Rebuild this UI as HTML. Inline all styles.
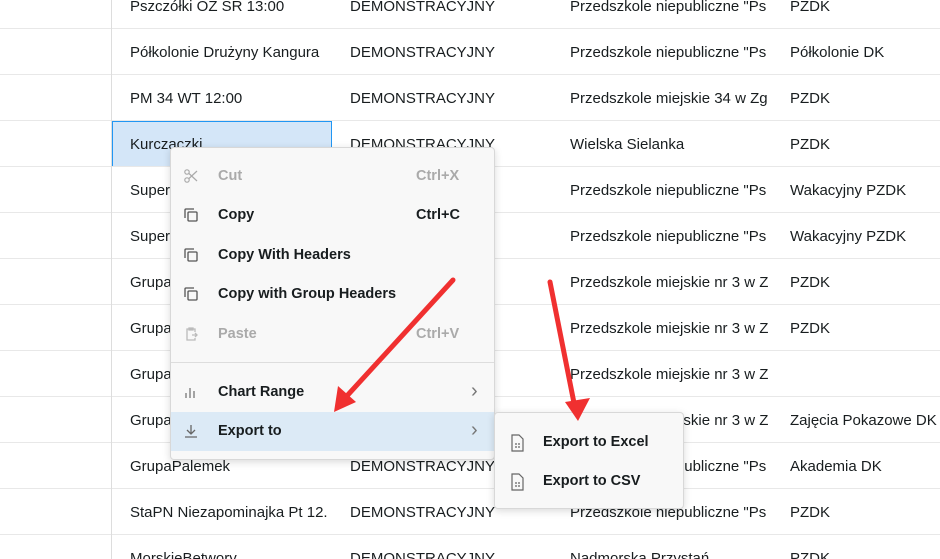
<!DOCTYPE html>
<html><head><meta charset="utf-8"><style>
html,body{margin:0;width:940px;height:559px;overflow:hidden}
body{background:#fff;font-family:"Liberation Sans",sans-serif;font-size:15px;color:#181d1f;position:relative}
.row{position:absolute;left:0;width:940px;height:46px;border-bottom:1px solid #e8e8e8;box-sizing:border-box}
.c{position:absolute;top:1px;height:45px;line-height:45px;white-space:nowrap;overflow:hidden}
.c1{left:130px;width:200px}.c2{left:350px;width:200px}.c3{left:570px;width:201px}.c4{left:790px;width:150px}
.vl{position:absolute;left:111px;top:0;width:1px;height:559px;background:#ddd;z-index:1}
.sel{position:absolute;left:112px;top:121px;width:220px;height:46px;background:#d4e6f8;border:1px solid #2196f3;box-sizing:border-box}
.menu{position:absolute;left:170px;top:147px;width:325px;height:313px;background:#f8f8f8;border:1px solid #d8d8d8;border-radius:4px;box-shadow:0 2px 8px rgba(0,0,0,.15);box-sizing:border-box;z-index:2}
.mi{position:absolute;left:0;width:323px;height:39px;line-height:39px;font-weight:bold;color:#181d1f;font-size:14.5px}
.mi .t{position:absolute;left:47px}.mi .k{position:absolute;left:245px}
.mi.dis{color:#aaa}
.mi svg{position:absolute;left:12px;top:11px}
.chev{position:absolute;left:300px;top:-1px;color:#777;font-weight:normal;font-size:20px}
.sub{position:absolute;left:494px;top:412px;width:190px;height:97px;background:#f8f8f8;border:1px solid #d8d8d8;border-radius:4px;box-shadow:0 2px 8px rgba(0,0,0,.15);box-sizing:border-box;z-index:2}
.si{position:absolute;left:0;height:39px;line-height:39px;font-weight:bold;font-size:14.5px}
.si .t{position:absolute;left:48px;white-space:nowrap}
.si svg{position:absolute;left:14px;top:11px}
</style></head><body>
<div class="vl"></div>
<div class="row" style="top:-17px"><div class="c c1">Pszczółki OZ SR 13:00</div><div class="c c2">DEMONSTRACYJNY</div><div class="c c3">Przedszkole niepubliczne "Ps</div><div class="c c4">PZDK</div></div>
<div class="row" style="top:29px"><div class="c c1">Półkolonie Drużyny Kangura</div><div class="c c2">DEMONSTRACYJNY</div><div class="c c3">Przedszkole niepubliczne "Ps</div><div class="c c4">Półkolonie DK</div></div>
<div class="row" style="top:75px"><div class="c c1">PM 34 WT 12:00</div><div class="c c2">DEMONSTRACYJNY</div><div class="c c3">Przedszkole miejskie 34 w Zg</div><div class="c c4">PZDK</div></div>
<div class="sel"></div>
<div class="row" style="top:121px"><div class="c c1">Kurczaczki</div><div class="c c2">DEMONSTRACYJNY</div><div class="c c3">Wielska Sielanka</div><div class="c c4">PZDK</div></div>
<div class="row" style="top:167px"><div class="c c1">Super</div><div class="c c3">Przedszkole niepubliczne "Ps</div><div class="c c4">Wakacyjny PZDK</div></div>
<div class="row" style="top:213px"><div class="c c1">Super</div><div class="c c3">Przedszkole niepubliczne "Ps</div><div class="c c4">Wakacyjny PZDK</div></div>
<div class="row" style="top:259px"><div class="c c1">Grupa</div><div class="c c3">Przedszkole miejskie nr 3 w Z</div><div class="c c4">PZDK</div></div>
<div class="row" style="top:305px"><div class="c c1">Grupa</div><div class="c c3">Przedszkole miejskie nr 3 w Z</div><div class="c c4">PZDK</div></div>
<div class="row" style="top:351px"><div class="c c1">Grupa</div><div class="c c3">Przedszkole miejskie nr 3 w Z</div></div>
<div class="row" style="top:397px"><div class="c c1">Grupa</div><div class="c c3">Przedszkole miejskie nr 3 w Z</div><div class="c c4">Zajęcia Pokazowe DK</div></div>
<div class="row" style="top:443px"><div class="c c1">GrupaPalemek</div><div class="c c2">DEMONSTRACYJNY</div><div class="c c3">Przedszkole niepubliczne "Ps</div><div class="c c4">Akademia DK</div></div>
<div class="row" style="top:489px"><div class="c c1">StaPN Niezapominajka Pt 12.</div><div class="c c2">DEMONSTRACYJNY</div><div class="c c3">Przedszkole niepubliczne "Ps</div><div class="c c4">PZDK</div></div>
<div class="row" style="top:535px"><div class="c c1">MorskieBetwory</div><div class="c c2">DEMONSTRACYJNY</div><div class="c c3">Nadmorska Przystań</div><div class="c c4">PZDK</div></div>

<div class="menu">
 <div class="mi dis" style="top:9px"><svg width="16" height="16" viewBox="0 0 16 16" fill="none" stroke="#aaa" stroke-width="1.2"><circle cx="4" cy="4" r="2.2"/><circle cx="4" cy="12" r="2.2"/><path d="M6 5.5L14 13M6 10.5L14 3"/></svg><span class="t">Cut</span><span class="k">Ctrl+X</span></div>
 <div class="mi" style="top:48px"><svg width="16" height="16" viewBox="0 0 16 16" fill="none" stroke="#555" stroke-width="1.3"><rect x="5" y="5" width="9" height="9" rx="1"/><path d="M11 2H3a1 1 0 0 0-1 1v8"/></svg><span class="t">Copy</span><span class="k">Ctrl+C</span></div>
 <div class="mi" style="top:88px"><svg width="16" height="16" viewBox="0 0 16 16" fill="none" stroke="#555" stroke-width="1.3"><rect x="5" y="5" width="9" height="9" rx="1"/><path d="M11 2H3a1 1 0 0 0-1 1v8"/></svg><span class="t">Copy With Headers</span></div>
 <div class="mi" style="top:127px"><svg width="16" height="16" viewBox="0 0 16 16" fill="none" stroke="#555" stroke-width="1.3"><rect x="5" y="5" width="9" height="9" rx="1"/><path d="M11 2H3a1 1 0 0 0-1 1v8"/></svg><span class="t">Copy with Group Headers</span></div>
 <div class="mi dis" style="top:167px"><svg width="16" height="16" viewBox="0 0 16 16" fill="none" stroke="#bbb" stroke-width="1.3"><path d="M12 6V3H4v11h8v-2M6 2h4v2H6zM9 9h5M12 7l2 2-2 2"/></svg><span class="t">Paste</span><span class="k">Ctrl+V</span></div>
 <div style="position:absolute;left:0;top:214px;width:323px;height:1px;background:#ddd"></div>
 <div class="mi" style="top:225px"><svg width="16" height="16" viewBox="0 0 16 16" fill="none" stroke="#777" stroke-width="1.3"><path d="M3 14V9M7 14V4M11 14V7"/></svg><span class="t">Chart Range</span><span class="chev">›</span></div>
 <div class="mi" style="top:264px;background:#dceaf6"><svg width="16" height="16" viewBox="0 0 16 16" fill="none" stroke="#666" stroke-width="1.3"><path d="M8 2v9M4 7l4 4 4-4M2 14h12"/></svg><span class="t">Export to</span><span class="chev">›</span></div>
</div>
<div class="sub">
 <div class="si" style="top:10px"><svg width="16" height="18" viewBox="0 0 16 18" fill="none" stroke="#666" stroke-width="1.2"><path d="M3 1h7l4 4v12H3z"/><path d="M6 10h2M9 10h2M6 13h2M9 13h2"/></svg><span class="t">Export to Excel</span></div>
 <div class="si" style="top:49px"><svg width="16" height="18" viewBox="0 0 16 18" fill="none" stroke="#666" stroke-width="1.2"><path d="M3 1h7l4 4v12H3z"/><path d="M6 10h2M9 10h2M6 13h2M9 13h2"/></svg><span class="t">Export to CSV</span></div>
</div>
<svg style="position:absolute;left:0;top:0;z-index:3" width="940" height="559">
 <g stroke="#f03030" stroke-width="5" stroke-linecap="round" fill="#f03030">
  <path d="M453 280L345 398"/>
  <path d="M550 282L575 408"/>
 </g>
 <polygon fill="#f03030" points="334,412 338,386 356,402"/>
 <polygon fill="#f03030" points="578,421 565,402 590,398"/>
</svg>
</body></html>
